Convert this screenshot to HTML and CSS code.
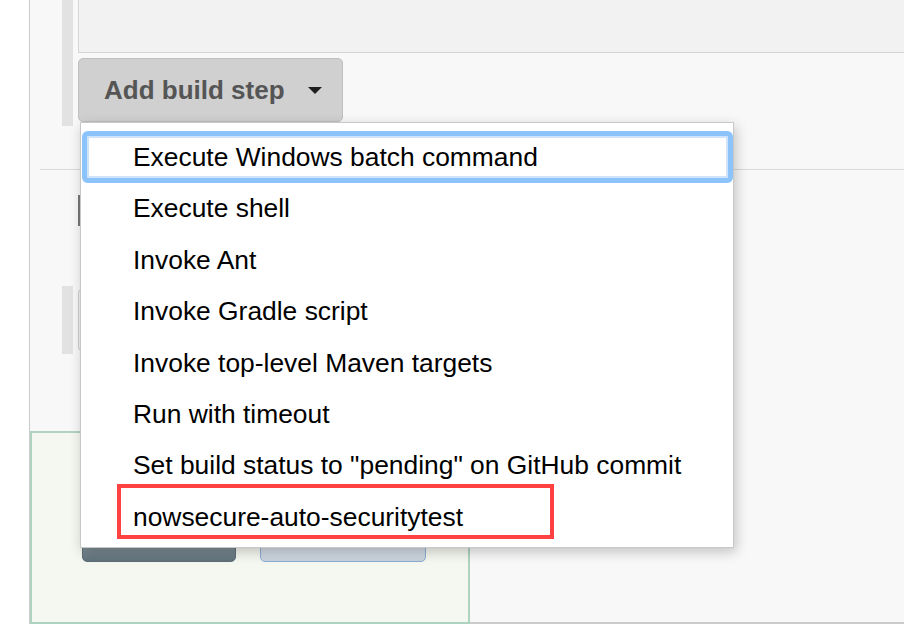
FILE: index.html
```html
<!DOCTYPE html>
<html>
<head>
<meta charset="utf-8">
<link rel="stylesheet" href="styles.css">
</head>
<body>
<div class="page">
  <div class="gutter"></div>
  <div class="main">
    <div class="section">
      <div class="bar bar-top"></div>
      <div class="section-body">
        <div class="prev-box"></div>
        <div class="add-row">
          <button class="add-btn">Add build step <span class="caret"></span></button>
          <div class="menu">
            <div class="item item-focus">Execute Windows batch command</div>
            <div class="item">Execute shell</div>
            <div class="item">Invoke Ant</div>
            <div class="item">Invoke Gradle script</div>
            <div class="item">Invoke top-level Maven targets</div>
            <div class="item">Run with timeout</div>
            <div class="item">Set build status to "pending" on GitHub commit</div>
            <div class="item">nowsecure-auto-securitytest</div>
            <div class="highlight"></div>
          </div>
        </div>
      </div>
    </div>
    <div class="divider"></div>
    <div class="section2">
      <div class="cursor-line"></div>
      <div class="row2">
        <div class="bar bar-mid"></div>
        <div class="pill"></div>
      </div>
    </div>
    <div class="footer-row">
      <div class="green-panel">
        <div class="btn-row">
          <div class="btn-save"></div>
          <div class="btn-apply"></div>
        </div>
      </div>
      <div class="filler"></div>
    </div>
  </div>
</div>
</body>
</html>
```
FILE: styles.css
```css
html, body {
  margin: 0;
  padding: 0;
  height: 100%;
  overflow: hidden;
  background: #ffffff;
  font-family: "Liberation Sans", Arial, sans-serif;
}
.page {
  display: flex;
  height: 624px;
}
.gutter {
  width: 29px;
  background: #ffffff;
}
.main {
  flex: 1;
  border-left: 1px solid #cccccc;
  background: #f8f8f8;
  display: flex;
  flex-direction: column;
}
.section {
  display: flex;
  align-items: flex-start;
  padding-left: 32px;
  height: 126px;
}
.bar {
  width: 11px;
  background: #e2e2e2;
}
.bar-top {
  height: 126px;
}
.section-body {
  flex: 1;
  margin-left: 5px;
  display: flex;
  flex-direction: column;
}
.prev-box {
  height: 52px;
  background: #f2f2f2;
  border-left: 1px solid #d6d6d6;
  border-bottom: 1px solid #d4d4d4;
}
.add-row {
  position: relative;
  margin-top: 5px;
}
.add-btn {
  box-sizing: border-box;
  height: 64px;
  width: 265px;
  display: flex;
  align-items: center;
  padding: 0 0 0 25px;
  background: #d0d0d0;
  border: 1px solid #bfbfbf;
  border-radius: 5px;
  font-family: "Liberation Sans", Arial, sans-serif;
  font-weight: bold;
  font-size: 26px;
  color: #555555;
}
.caret {
  margin-left: 23px;
  width: 0;
  height: 0;
  border-left: 7px solid transparent;
  border-right: 7px solid transparent;
  border-top: 7px solid #1e1e1e;
}
.menu {
  position: absolute;
  left: 2px;
  top: 64px;
  box-sizing: border-box;
  width: 654px;
  height: 426px;
  background: #ffffff;
  border: 1px solid #c8c8c8;
  box-shadow: 2px 4px 12px rgba(0, 0, 0, 0.22);
  padding-top: 8.3px;
  z-index: 5;
}
.item {
  box-sizing: border-box;
  height: 51.4px;
  display: flex;
  align-items: center;
  padding-left: 52px;
  padding-top: 1px;
  font-size: 26.4px;
  color: #000000;
  white-space: nowrap;
}
.item-focus {
  margin-left: 1px;
  padding-left: 51px;
  border-radius: 6px;
  box-shadow: inset 0 0 0 5px #8cc3fb, inset 0 0 0 7px #cfe4fb;
}
.highlight {
  position: absolute;
  left: 36px;
  top: 361px;
  width: 437px;
  height: 55px;
  box-sizing: border-box;
  border: 4px solid #ff4141;
}
.divider {
  margin-top: 43px;
  margin-left: 10px;
  height: 1px;
  background: #dadada;
}
.section2 {
  padding-top: 25px;
  padding-left: 32px;
  display: flex;
  flex-direction: column;
}
.cursor-line {
  margin-left: 16px;
  width: 3px;
  height: 31px;
  background: #777777;
}
.row2 {
  margin-top: 60px;
  display: flex;
  align-items: center;
  height: 68px;
}
.bar-mid {
  height: 68px;
}
.pill {
  margin-left: 5px;
  width: 8px;
  height: 60px;
  border: 1px solid #cfcfcf;
  border-radius: 4px;
  background: #f0f0f0;
}
.footer-row {
  margin-top: 77px;
  display: flex;
  align-items: flex-end;
  height: 193px;
}
.green-panel {
  box-sizing: border-box;
  width: 440px;
  height: 193px;
  background: #f5f8f0;
  border: 2px solid #afd3c1;
  padding: 89px 0 0 50px;
}
.btn-row {
  display: flex;
  gap: 24px;
}
.btn-save {
  width: 154px;
  height: 40px;
  border-radius: 5px;
  background: linear-gradient(#b6c2c8, #60727b);
  border: 1px solid #5d6e76;
  box-sizing: border-box;
}
.btn-apply {
  width: 166px;
  height: 40px;
  border-radius: 5px;
  background: linear-gradient(#e6ebf0, #c9d3dd);
  border: 1px solid #8aaed5;
  box-sizing: border-box;
}
.filler {
  flex: 1;
  height: 2px;
  background: #cccccc;
}
```
